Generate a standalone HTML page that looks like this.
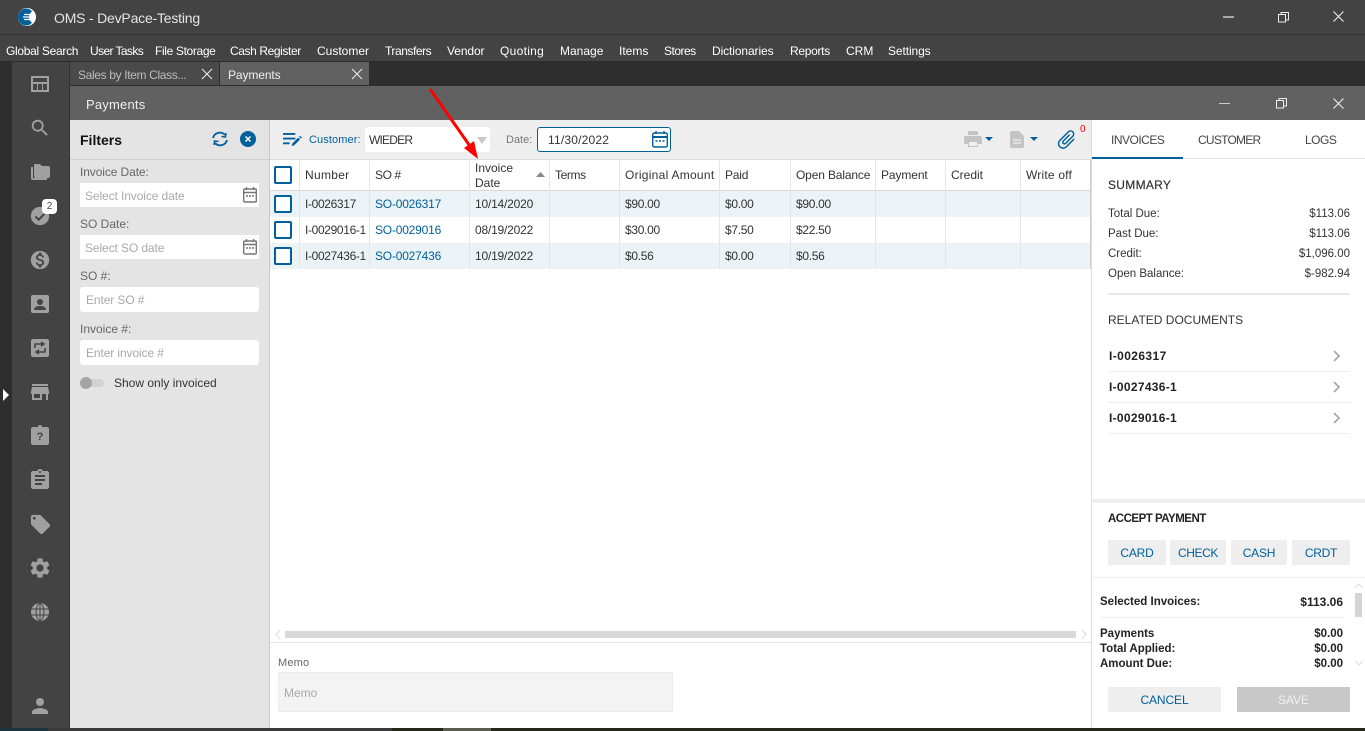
<!DOCTYPE html>
<html><head><meta charset="utf-8"><title>OMS - DevPace-Testing</title>
<style>
html,body{margin:0;padding:0;width:1365px;height:731px;overflow:hidden;background:#fff;font-family:"Liberation Sans",sans-serif;font-size:12px;color:#333}
.b{position:absolute}
.t{position:absolute;white-space:nowrap;line-height:16px}
.r{position:absolute;white-space:nowrap;line-height:16px;text-align:right}
svg{position:absolute;overflow:visible}
.m{color:#fff;top:43px}
.nav{fill:#a0a0a0}
.lbl{color:#666}
.ph{color:#a9a9a9}
.cb{position:absolute;left:274px;width:14px;height:14px;border:2px solid #00609c;border-radius:2px;background:#fff}
.sep{position:absolute;width:1px;background:#e2e6e8;top:160px;height:109px}
.lnk{color:#00609c}
.btn{position:absolute;background:#eeeeee;color:#00609c;text-align:center;border-radius:2px;top:540px;height:25px;line-height:26px}
.bold{font-weight:bold;color:#222}
.id{letter-spacing:-.35px}
.so{letter-spacing:-.2px}
.dt{letter-spacing:-.2px}
.mn{letter-spacing:-.3px}
.s{font-size:11.500px}
</style></head><body>
<!-- title + menu -->
<div class="b" style="left:0;top:0;width:1365px;height:61px;background:#434343"></div>
<div class="b" style="left:0;top:34px;width:1365px;height:1px;background:#333"></div>
<div class="b" style="left:0;top:61px;width:1365px;height:25px;background:#2e2e2e"></div>
<svg style="left:18px;top:8px" width="18" height="18" viewBox="0 0 18 18"><circle cx="9" cy="9" r="9" fill="#fff"/><path d="M8.500 0.500A8.500 8.500 0 0 0 8.500 17.500C11 17.500 13 16 14 14.500A6.500 6.500 0 0 1 14 3.500C13 2 11 .5 8.500 .5Z" fill="#00609c"/><path d="M6 6.500h6M5 9h8M6 11.500h6" stroke="#fff" stroke-width="1.300"/></svg>
<div class="t" style="left:54px;top:10px;font-size:14px;color:#e4e4e4;letter-spacing:-.2px">OMS - DevPace-Testing</div>
<div class="b" style="left:1223px;top:16px;width:11px;height:2px;background:#a8a8a8"></div>
<svg style="left:1278px;top:12px" width="11" height="11" viewBox="0 0 11 11" fill="none" stroke="#eee"><rect x="0.5" y="2.500" width="7" height="7.500"/><path d="M3 2.500V.5h7.500V8H8"/></svg>
<svg style="left:1333px;top:11px" width="11" height="11" viewBox="0 0 11 11" stroke="#eee" stroke-width="1.100"><path d="M.5.5l10 10M10.500.5l-10 10"/></svg>

<div class="t m" style="left:6px;letter-spacing:-.3px">Global Search</div>
<div class="t m" style="left:90px;letter-spacing:-.6px">User Tasks</div>
<div class="t m" style="left:155px;letter-spacing:-.35px">File Storage</div>
<div class="t m" style="left:230px;letter-spacing:-.4px">Cash Register</div>
<div class="t m" style="left:317px">Customer</div>
<div class="t m" style="left:385px;letter-spacing:-.45px">Transfers</div>
<div class="t m" style="left:447px;letter-spacing:-.1px">Vendor</div>
<div class="t m" style="left:500px;letter-spacing:.3px">Quoting</div>
<div class="t m" style="left:560px">Manage</div>
<div class="t m" style="left:619px">Items</div>
<div class="t m" style="left:664px;letter-spacing:-.5px">Stores</div>
<div class="t m" style="left:712px;letter-spacing:-.1px">Dictionaries</div>
<div class="t m" style="left:790px;letter-spacing:-.3px">Reports</div>
<div class="t m" style="left:846px">CRM</div>
<div class="t m" style="left:888px;letter-spacing:-.1px">Settings</div>

<!-- sidebar -->
<div class="b" style="left:0;top:61px;width:12px;height:667px;background:#2e2e2e"></div>
<div class="b" style="left:12px;top:62px;width:57px;height:666px;background:#434343"></div>
<div class="b" style="left:69px;top:62px;width:1px;height:666px;background:#333"></div>
<svg style="left:3px;top:389px" width="6" height="12"><path d="M0 0l6 6-6 6z" fill="#fff"/></svg>

<svg class="nav" style="left:31px;top:76px" width="18" height="16" viewBox="0 0 18 16"><path fill-rule="evenodd" d="M0 0h18v16H0zM2 2v4h14V2zM2 8v6h4V8zM7 8v6h4V8zM12 8v6h4V8z"/></svg>
<svg class="nav" style="left:29px;top:117px" width="22" height="22" viewBox="0 0 24 24"><path d="M15.500 14h-.79l-.28-.27A6.471 6.471 0 0 0 16 9.500 6.500 6.500 0 1 0 9.500 16c1.610 0 3.090-.59 4.230-1.570l.27.28v.79l5 4.990L20.490 19l-4.990-5zm-6 0C7.010 14 5 11.990 5 9.500S7.010 5 9.500 5 14 7.010 14 9.500 11.990 14 9.500 14z"/></svg>
<svg class="nav" style="left:31px;top:164px" width="19" height="16" viewBox="0 0 19 16"><path d="M0 3h2v11h14v2H2a2 2 0 0 1-2-2zM4 0h5l2 2h6a2 2 0 0 1 2 2v8a2 2 0 0 1-2 2H5a2 2 0 0 1-2-2V1a1 1 0 0 1 1-1z"/></svg>
<svg style="left:29px;top:205px" width="22" height="22" viewBox="0 0 24 24"><path fill="#a0a0a0" d="M12 2a10 10 0 1 0 0 20 10 10 0 0 0 0-20z"/><path d="M7 12.500l3.500 3.500L17 9.500" fill="none" stroke="#434343" stroke-width="2.200"/></svg>
<div class="b" style="left:42px;top:199px;width:15px;height:15px;background:#fff;border-radius:4px;color:#444;font-size:10px;line-height:15px;text-align:center">2</div>
<svg class="nav" style="left:29px;top:249px" width="22" height="22" viewBox="0 0 24 24"><path d="M12 2C6.480 2 2 6.480 2 12s4.480 10 10 10 10-4.480 10-10S17.520 2 12 2zm1.410 16.090V20h-2.670v-1.930c-1.710-.36-3.160-1.460-3.270-3.400h1.960c.1 1.050.82 1.870 2.650 1.870 1.960 0 2.400-.98 2.400-1.590 0-.83-.44-1.610-2.670-2.140-2.480-.6-4.180-1.620-4.180-3.670 0-1.720 1.390-2.840 3.110-3.210V4h2.670v1.950c1.860.45 2.790 1.860 2.850 3.390H14.300c-.05-1.110-.64-1.870-2.220-1.870-1.500 0-2.400.68-2.400 1.640 0 .84.65 1.390 2.670 1.910s4.180 1.390 4.180 3.910c-.01 1.830-1.380 2.830-3.120 3.160z"/></svg>
<svg style="left:31px;top:295px" width="18" height="18" viewBox="0 0 18 18"><rect width="18" height="18" rx="2" fill="#a0a0a0"/><circle cx="9" cy="7" r="3" fill="#434343"/><path d="M3 15c0-3 3-4 6-4s6 1 6 4z" fill="#434343"/></svg>
<svg style="left:31px;top:339px" width="18" height="18" viewBox="0 0 18 18"><rect width="18" height="18" rx="2" fill="#a0a0a0"/><path d="M4 9V5h8M10 3l3 2-3 2M14 9v4H6M8 11l-3 2 3 2" fill="none" stroke="#434343" stroke-width="1.600"/></svg>
<svg class="nav" style="left:28px;top:380px" width="24" height="24" viewBox="0 0 24 24"><path d="M20 4H4v2h16V4zm1 10v-2l-1-5H4l-1 5v2h1v6h10v-6h4v6h2v-6h1zm-9 4H6v-4h6v4z"/></svg>
<svg style="left:31px;top:425px" width="18" height="20" viewBox="0 0 18 20"><path fill="#a0a0a0" d="M2 2h5a2 2 0 0 1 4 0h5a2 2 0 0 1 2 2v14a2 2 0 0 1-2 2H2a2 2 0 0 1-2-2V4a2 2 0 0 1 2-2z"/><text x="9" y="15" text-anchor="middle" font-size="11" font-weight="bold" font-family="Liberation Sans" fill="#434343">?</text></svg>
<svg class="nav" style="left:28px;top:468px" width="24" height="24" viewBox="0 0 24 24"><path d="M19 3h-4.180C14.400 1.840 13.300 1 12 1c-1.300 0-2.400.84-2.820 2H5c-1.100 0-2 .9-2 2v14c0 1.100.9 2 2 2h14c1.100 0 2-.9 2-2V5c0-1.100-.9-2-2-2zm-7 0c.55 0 1 .45 1 1s-.45 1-1 1-1-.45-1-1 .45-1 1-1zm2 14H7v-2h7v2zm3-4H7v-2h10v2zm0-4H7V7h10v2z"/></svg>
<svg class="nav" style="left:29px;top:513px" width="23" height="23" viewBox="0 0 24 24"><path d="M21.410 11.580l-9-9C12.050 2.220 11.550 2 11 2H4c-1.100 0-2 .9-2 2v7c0 .55.22 1.050.59 1.420l9 9c.36.36.86.58 1.410.58.55 0 1.050-.22 1.410-.59l7-7c.37-.36.59-.86.59-1.410 0-.55-.23-1.060-.59-1.420zM5.500 7C4.670 7 4 6.330 4 5.500S4.670 4 5.500 4 7 4.670 7 5.500 6.330 7 5.500 7z"/></svg>
<svg class="nav" style="left:28px;top:556px" width="24" height="24" viewBox="0 0 24 24"><path d="M19.140 12.940c.04-.3.06-.61.06-.94 0-.32-.02-.64-.07-.94l2.030-1.580a.49.49 0 0 0 .12-.61l-1.920-3.320a.488.488 0 0 0-.59-.22l-2.390.96c-.5-.38-1.030-.7-1.620-.94l-.36-2.540a.484.484 0 0 0-.48-.41h-3.840c-.24 0-.43.17-.47.41l-.36 2.540c-.59.24-1.130.57-1.620.94l-2.390-.96c-.22-.08-.47 0-.59.22L2.740 8.870c-.12.21-.08.47.12.61l2.030 1.580c-.05.3-.09.63-.09.94s.02.64.07.94l-2.030 1.580a.49.49 0 0 0-.12.61l1.920 3.320c.12.22.37.29.59.22l2.390-.96c.5.38 1.030.7 1.620.94l.36 2.540c.05.24.24.41.48.41h3.840c.24 0 .44-.17.47-.41l.36-2.540c.59-.24 1.130-.56 1.620-.94l2.390.96c.22.08.47 0 .59-.22l1.920-3.320c.12-.22.07-.47-.12-.61l-2.010-1.580zM12 15.600c-1.980 0-3.600-1.620-3.600-3.600s1.620-3.600 3.600-3.600 3.600 1.620 3.600 3.600-1.620 3.600-3.600 3.600z"/></svg>
<svg style="left:31px;top:603px" width="18" height="18" viewBox="0 0 18 18"><circle cx="9" cy="9" r="9" fill="#a0a0a0"/><g fill="none" stroke="#434343" stroke-width=".9"><ellipse cx="9" cy="9" rx="4" ry="8.500"/><path d="M9 0v18M.5 6h17M.5 12h17"/></g></svg>
<svg class="nav" style="left:28px;top:694px" width="24" height="24" viewBox="0 0 24 24"><path d="M12 12c2.210 0 4-1.790 4-4s-1.790-4-4-4-4 1.790-4 4 1.790 4 4 4zm0 2c-2.670 0-8 1.340-8 4v2h16v-2c0-2.660-5.330-4-8-4z"/></svg>

<!-- tabs -->
<div class="b" style="left:70px;top:62px;width:149px;height:23px;background:#4a4a4a"></div>
<div class="b" style="left:220px;top:62px;width:149px;height:23px;background:#616161"></div>
<div class="t" style="left:78px;top:67px;color:#bdbdbd;letter-spacing:-.35px">Sales by Item Class...</div>
<div class="t" style="left:228px;top:67px;color:#f0f0f0;letter-spacing:-.1px">Payments</div>
<svg style="left:202px;top:69px" width="10" height="10" stroke="#eee"><path d="M0 0l10 10M10 0L0 10"/></svg>
<svg style="left:352px;top:69px" width="10" height="10" stroke="#eee"><path d="M0 0l10 10M10 0L0 10"/></svg>

<!-- window header -->
<div class="b" style="left:70px;top:86px;width:1295px;height:34px;background:#616161"></div>
<div class="t" style="left:86px;top:97px;font-size:13px;color:#f0f0f0;letter-spacing:.2px">Payments</div>
<div class="b" style="left:1219px;top:103px;width:11px;height:1px;background:#ccc"></div>
<svg style="left:1276px;top:98px" width="11" height="11" viewBox="0 0 11 11" fill="none" stroke="#eee"><rect x="0.5" y="2.500" width="7" height="7.500"/><path d="M3 2.500V.5h7.500V8H8"/></svg>
<svg style="left:1333px;top:98px" width="11" height="11" stroke="#eee" stroke-width="1.100"><path d="M.5.5l10 10M10.500.5l-10 10"/></svg>

<!-- filters -->
<div class="b" style="left:70px;top:120px;width:199px;height:608px;background:#e4e4e4"></div>
<div class="b" style="left:269px;top:120px;width:1px;height:608px;background:#c8c8c8"></div>
<div class="b" style="left:70px;top:159px;width:199px;height:1px;background:#cfcfcf"></div>
<div class="t" style="left:80px;top:132px;font-size:14px;font-weight:bold;color:#111">Filters</div>
<svg style="left:211px;top:131px" width="18" height="16" viewBox="0 0 18 16" fill="none" stroke="#00609c" stroke-width="1.800"><path d="M2 7a7 7 0 0 1 12-3M16 9a7 7 0 0 1-12 3"/><path d="M15 2l-.5 4-4-.5M3 14l.5-4 4 .5" stroke-width="1.500"/></svg>
<svg style="left:240px;top:131px" width="16" height="16"><circle cx="8" cy="8" r="8" fill="#00609c"/><path d="M5.500 5.500l5 5M10.500 5.500l-5 5" stroke="#fff" stroke-width="1.500"/></svg>

<div class="t lbl" style="left:80px;top:164px;letter-spacing:-.1px">Invoice Date:</div>
<div class="b" style="left:80px;top:183px;width:179px;height:24px;background:#fff"></div>
<div class="t ph" style="left:85px;top:188px;letter-spacing:-.1px">Select Invoice date</div>
<svg style="left:243px;top:187px" width="14" height="16" viewBox="0 0 14 16" fill="none" stroke="#777" stroke-width="1.400"><rect x=".7" y="2" width="12.600" height="13" rx="1"/><path d="M.7 5.500h12.600M3.500 0v3M10.500 0v3"/><path d="M3 9h2M6 9h2M9 9h2"/></svg>
<div class="t lbl" style="left:80px;top:216px">SO Date:</div>
<div class="b" style="left:80px;top:235px;width:179px;height:24px;background:#fff"></div>
<div class="t ph" style="left:85px;top:240px;letter-spacing:-.1px">Select SO date</div>
<svg style="left:243px;top:239px" width="14" height="16" viewBox="0 0 14 16" fill="none" stroke="#777" stroke-width="1.400"><rect x=".7" y="2" width="12.600" height="13" rx="1"/><path d="M.7 5.500h12.600M3.500 0v3M10.500 0v3"/><path d="M3 9h2M6 9h2M9 9h2"/></svg>
<div class="t lbl" style="left:80px;top:268px">SO #:</div>
<div class="b" style="left:80px;top:287px;width:179px;height:25px;background:#fff;border-radius:3px"></div>
<div class="t ph" style="left:86px;top:292px;letter-spacing:-.1px">Enter SO #</div>
<div class="t lbl" style="left:80px;top:321px">Invoice #:</div>
<div class="b" style="left:80px;top:340px;width:179px;height:25px;background:#fff;border-radius:3px"></div>
<div class="t ph" style="left:86px;top:345px;letter-spacing:-.1px">Enter invoice #</div>
<div class="b" style="left:81px;top:379px;width:23px;height:8px;border-radius:4px;background:#d2d2d2"></div>
<div class="b" style="left:80px;top:377px;width:12px;height:12px;border-radius:6px;background:#a4a4a4"></div>
<div class="t" style="left:114px;top:375px">Show only invoiced</div>

<!-- toolbar -->
<div class="b" style="left:270px;top:120px;width:821px;height:39px;background:#eeeeee"></div>
<div class="b" style="left:270px;top:159px;width:821px;height:1px;background:#dcdcdc"></div>
<svg style="left:283px;top:132px" width="19" height="16" viewBox="0 0 20 17" fill="#00609c"><path d="M0 1h13v2H0zM0 6h13v2H0zM0 11h7v2H0z"/><path d="M9 15l1-3 6-6 2 2-6 6zM17 5l1-1 2 2-1 1z"/></svg>
<div class="t lnk" style="left:309px;top:132px;font-size:11px;letter-spacing:.1px">Customer:</div>
<div class="b" style="left:365px;top:127px;width:125px;height:25px;background:#fff;border-radius:3px"></div>
<div class="t" style="left:369px;top:132px;letter-spacing:-.8px">WIEDER</div>
<svg style="left:477px;top:137px" width="10" height="7"><path d="M0 0h10L5 7z" fill="#c8c8c8"/></svg>
<div class="t" style="left:506px;top:132px;color:#777;font-size:11px">Date:</div>
<div class="b" style="left:537px;top:127px;width:132px;height:23px;background:#fff;border:1px solid #00609c;border-radius:3px"></div>
<div class="t" style="left:548px;top:132px;letter-spacing:.2px">11/30/2022</div>
<svg style="left:652px;top:131px" width="16" height="17" viewBox="0 0 16 17" fill="none" stroke="#00609c" stroke-width="1.400"><rect x=".7" y="2" width="14.600" height="14" rx="1.500"/><path d="M.7 6h14.600" stroke-width="2"/><path d="M4 0v3M12 0v3M3.500 10h2M7 10h2M10.500 10h2"/></svg>
<svg style="left:964px;top:131px" width="30" height="17" viewBox="0 0 30 17"><path fill="#c4c4c4" d="M4 0h10v4H4zM2 5h14a2 2 0 0 1 2 2v6h-4v3H4v-3H0V7a2 2 0 0 1 2-2z"/><path fill="#eee" d="M5 11h8v4H5z"/><path fill="#00609c" d="M21 6h8l-4 4z"/></svg>
<svg style="left:1010px;top:131px" width="30" height="17" viewBox="0 0 30 17"><path fill="#c4c4c4" d="M0 2a2 2 0 0 1 2-2h7l5 5v10a2 2 0 0 1-2 2H2a2 2 0 0 1-2-2z"/><path d="M3 9h8M3 12h8" stroke="#eee" stroke-width="1.200"/><path fill="#00609c" d="M20 6h8l-4 4z"/></svg>
<svg style="left:1055px;top:128px" width="23" height="23" viewBox="0 0 24 24"><path fill="#00609c" transform="rotate(45 12 12)" d="M16.500 6v11.500c0 2.210-1.790 4-4 4s-4-1.790-4-4V5c0-1.380 1.120-2.500 2.500-2.500s2.500 1.120 2.500 2.500v10.500c0 .55-.45 1-1 1s-1-.45-1-1V6H10v9.500c0 1.380 1.120 2.500 2.500 2.500s2.500-1.120 2.500-2.500V5c0-2.210-1.790-4-4-4S7 2.790 7 5v12.500c0 3.040 2.460 5.500 5.500 5.500s5.500-2.460 5.500-5.500V6h-1.500z"/></svg>
<div class="t" style="left:1080px;top:122px;font-size:10px;color:#f00">0</div>

<!-- table -->
<div class="b" style="left:270px;top:190px;width:821px;height:1px;background:#d8d8d8"></div>
<div class="b" style="left:270px;top:191px;width:821px;height:26px;background:#ecf3f6"></div>
<div class="b" style="left:270px;top:243px;width:821px;height:26px;background:#ecf3f6"></div>
<div class="sep" style="left:299px"></div><div class="sep" style="left:369px"></div><div class="sep" style="left:469px"></div><div class="sep" style="left:549px"></div><div class="sep" style="left:619px"></div><div class="sep" style="left:719px"></div><div class="sep" style="left:790px"></div><div class="sep" style="left:875px"></div><div class="sep" style="left:945px"></div><div class="sep" style="left:1020px"></div><div class="sep" style="left:1090px;background:#ccc"></div>
<div class="cb" style="top:166px"></div><div class="cb" style="top:195px"></div><div class="cb" style="top:221px"></div><div class="cb" style="top:247px"></div>

<div class="t" style="left:305px;top:167px;letter-spacing:.3px">Number</div>
<div class="t" style="left:375px;top:167px;letter-spacing:-.4px">SO #</div>
<div class="t" style="left:475px;top:161px;line-height:15px">Invoice<br>Date</div>
<svg style="left:536px;top:172px" width="9" height="5"><path d="M0 5L4.500 0 9 5z" fill="#888"/></svg>
<div class="t" style="left:555px;top:167px;letter-spacing:-.4px">Terms</div>
<div class="t" style="left:625px;top:167px;letter-spacing:.27px">Original Amount</div>
<div class="t" style="left:725px;top:167px;letter-spacing:-.2px">Paid</div>
<div class="t" style="left:796px;top:167px;letter-spacing:-.15px">Open Balance</div>
<div class="t" style="left:881px;top:167px;letter-spacing:-.1px">Payment</div>
<div class="t" style="left:951px;top:167px">Credit</div>
<div class="t" style="left:1026px;top:167px;letter-spacing:.2px">Write off</div>

<div class="t id" style="left:305px;top:196px">I-0026317</div>
<div class="t lnk so" style="left:375px;top:196px">SO-0026317</div>
<div class="t dt" style="left:475px;top:196px">10/14/2020</div>
<div class="t mn" style="left:625px;top:196px">$90.00</div>
<div class="t mn" style="left:725px;top:196px">$0.00</div>
<div class="t mn" style="left:796px;top:196px">$90.00</div>

<div class="t id" style="left:305px;top:222px">I-0029016-1</div>
<div class="t lnk so" style="left:375px;top:222px">SO-0029016</div>
<div class="t dt" style="left:475px;top:222px">08/19/2022</div>
<div class="t mn" style="left:625px;top:222px">$30.00</div>
<div class="t mn" style="left:725px;top:222px">$7.50</div>
<div class="t mn" style="left:796px;top:222px">$22.50</div>

<div class="t id" style="left:305px;top:248px">I-0027436-1</div>
<div class="t lnk so" style="left:375px;top:248px">SO-0027436</div>
<div class="t dt" style="left:475px;top:248px">10/19/2022</div>
<div class="t mn" style="left:625px;top:248px">$0.56</div>
<div class="t mn" style="left:725px;top:248px">$0.00</div>
<div class="t mn" style="left:796px;top:248px">$0.56</div>

<!-- arrow -->
<svg style="left:425px;top:85px" width="60" height="80" viewBox="0 0 60 80"><path d="M5 4L47 64" stroke="#f00" stroke-width="3" fill="none"/><path d="M53 74L39 63 49 56z" fill="#f00"/></svg>

<!-- hscroll -->
<svg style="left:275px;top:630px" width="6" height="9" fill="none" stroke="#ddd"><path d="M5 0L1 4.500 5 9"/></svg>
<div class="b" style="left:285px;top:631px;width:791px;height:7px;background:#d9d9d9"></div>
<svg style="left:1081px;top:630px" width="6" height="9" fill="none" stroke="#ddd"><path d="M1 0l4 4.500L1 9"/></svg>
<div class="b" style="left:270px;top:642px;width:821px;height:1px;background:#e4e4e4"></div>

<!-- memo -->
<div class="t" style="left:278px;top:655px;font-size:11px;color:#666;letter-spacing:.2px">Memo</div>
<div class="b" style="left:278px;top:672px;width:393px;height:38px;background:#f3f3f3;border:1px solid #ececec;border-radius:2px"></div>
<div class="t ph" style="left:284px;top:685px">Memo</div>

<!-- right panel -->
<div class="b" style="left:1091px;top:120px;width:1px;height:608px;background:#dedede"></div>
<div class="b" style="left:1092px;top:158px;width:273px;height:1px;background:#e8e8e8"></div>
<div class="b" style="left:1092px;top:157px;width:91px;height:2px;background:#00609c"></div>
<div class="t" style="left:1111px;top:132px;color:#444;letter-spacing:-.5px">INVOICES</div>
<div class="t" style="left:1198px;top:132px;color:#444;letter-spacing:-.75px">CUSTOMER</div>
<div class="t" style="left:1305px;top:132px;color:#444;letter-spacing:-.5px">LOGS</div>

<div class="t" style="left:1108px;top:177px;font-size:12px;color:#333;letter-spacing:.3px;-webkit-text-stroke:.2px #333">SUMMARY</div>
<div class="t s" style="left:1108px;top:206px">Total Due:</div><div class="r s" style="right:15px;top:206px">$113.06</div>
<div class="t s" style="left:1108px;top:226px">Past Due:</div><div class="r s" style="right:15px;top:226px">$113.06</div>
<div class="t s" style="left:1108px;top:246px">Credit:</div><div class="r s" style="right:15px;top:246px">$1,096.00</div>
<div class="t s" style="left:1108px;top:266px">Open Balance:</div><div class="r s" style="right:15px;top:266px">$-982.94</div>
<div class="b" style="left:1108px;top:293px;width:242px;height:2px;background:#e6e9ec"></div>

<div class="t" style="left:1108px;top:312px;color:#333">RELATED DOCUMENTS</div>
<div class="t bold" style="left:1109px;top:348px;letter-spacing:.4px">I-0026317</div>
<div class="t bold" style="left:1109px;top:379px;letter-spacing:.3px">I-0027436-1</div>
<div class="t bold" style="left:1109px;top:410px;letter-spacing:.3px">I-0029016-1</div>
<svg style="left:1333px;top:350px" width="8" height="12" fill="none" stroke="#aaa" stroke-width="1.800"><path d="M1 1l5 5-5 5"/></svg>
<svg style="left:1333px;top:381px" width="8" height="12" fill="none" stroke="#aaa" stroke-width="1.800"><path d="M1 1l5 5-5 5"/></svg>
<svg style="left:1333px;top:412px" width="8" height="12" fill="none" stroke="#aaa" stroke-width="1.800"><path d="M1 1l5 5-5 5"/></svg>
<div class="b" style="left:1108px;top:371px;width:242px;height:1px;background:#eee"></div>
<div class="b" style="left:1108px;top:402px;width:242px;height:1px;background:#eee"></div>
<div class="b" style="left:1108px;top:433px;width:242px;height:1px;background:#eee"></div>

<div class="b" style="left:1092px;top:499px;width:273px;height:4px;background:#eeeeee"></div>
<div class="t bold s" style="left:1108px;top:511px;letter-spacing:-.5px">ACCEPT PAYMENT</div>
<div class="btn" style="left:1108px;width:58px;letter-spacing:-.2px">CARD</div>
<div class="btn" style="left:1170px;width:56px;letter-spacing:-.4px">CHECK</div>
<div class="btn" style="left:1231px;width:56px;letter-spacing:-.2px">CASH</div>
<div class="btn" style="left:1292px;width:58px;letter-spacing:-.3px">CRDT</div>
<div class="b" style="left:1092px;top:577px;width:273px;height:1px;background:#eeeeee"></div>

<div class="t bold s" style="left:1100px;top:594px">Selected Invoices:</div><div class="r bold s" style="right:22px;top:594px;font-size:12px">$113.06</div>
<div class="b" style="left:1100px;top:617px;width:243px;height:1px;background:#eee"></div>
<div class="t bold s" style="left:1100px;top:626px">Payments</div><div class="r bold s" style="right:22px;top:626px">$0.00</div>
<div class="t bold s" style="left:1100px;top:641px">Total Applied:</div><div class="r bold s" style="right:22px;top:641px">$0.00</div>
<div class="t bold s" style="left:1100px;top:656px">Amount Due:</div><div class="r bold s" style="right:22px;top:656px">$0.00</div>
<svg style="left:1355px;top:583px" width="8" height="5" fill="none" stroke="#ddd"><path d="M0 5l4-4 4 4"/></svg>
<div class="b" style="left:1355px;top:593px;width:7px;height:24px;background:#d4d4d4"></div>
<svg style="left:1355px;top:661px" width="8" height="5" fill="none" stroke="#ddd"><path d="M0 0l4 4 4-4"/></svg>

<div class="b" style="left:1108px;top:687px;width:113px;height:25px;background:#eeeeee;color:#00609c;text-align:center;line-height:26px;letter-spacing:-.1px">CANCEL</div>
<div class="b" style="left:1237px;top:687px;width:113px;height:25px;background:#c8c8c8;color:#f0f0f0;text-align:center;line-height:26px;letter-spacing:-.1px">SAVE</div>

<!-- bottom strip -->
<div class="b" style="left:0;top:728px;width:1365px;height:3px;background:#26281c"></div>
<div class="b" style="left:0;top:728px;width:48px;height:3px;background:#1b3440"></div>
<div class="b" style="left:48px;top:728px;width:344px;height:3px;background:#3a3a3a"></div>
<div class="b" style="left:443px;top:728px;width:48px;height:3px;background:#5a5c50"></div>
</body></html>
